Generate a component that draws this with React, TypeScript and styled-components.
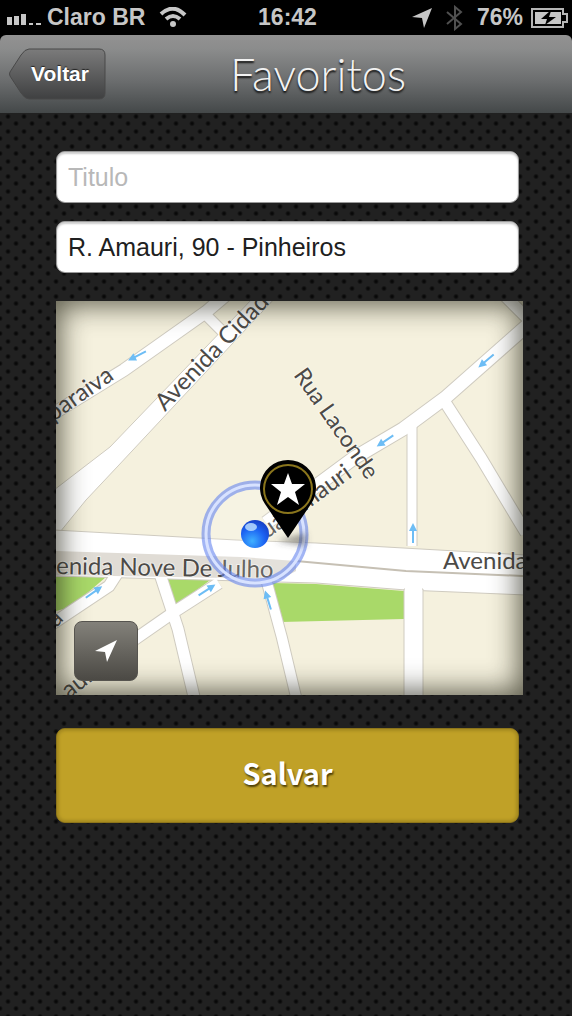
import React from 'react';
import styled, { createGlobalStyle } from 'styled-components';

const GlobalStyle = createGlobalStyle`
  * { box-sizing: border-box; }
  body {
    margin: 0;
    background-color: #212121;
    background-image:
      radial-gradient(circle at 50% 50%, #060606 0, #0a0a0a 1px, transparent 3px),
      radial-gradient(circle at 50% 50%, #060606 0, #0a0a0a 1px, transparent 3px);
    background-size: 16px 15px;
    background-position: 0 4px, 8px 11px;
    font-family: "Liberation Sans", Arial, sans-serif;
  }
  button, input { font-family: inherit; }
`;

const Screen = styled.div`
  display: flex;
  flex-direction: column;
  min-height: 100vh;
`;

const StatusBar = styled.div`
  display: grid;
  grid-template-columns: 1fr auto 1fr;
  align-items: center;
  height: 35px;
  padding: 0 4px 0 7px;
  background: #000;
  color: #c6c6c6;
  font-size: 23px;
  font-weight: 700;
  line-height: 35px;
  white-space: nowrap;
`;

const StatusGroup = styled.div<{ $end?: boolean }>`
  display: flex;
  align-items: center;
  justify-content: ${p => (p.$end ? 'flex-end' : 'flex-start')};
  gap: ${p => (p.$end ? 8 : 6)}px;
`;

const CarrierGap = styled.span`
  margin-right: 8px;
`;

const Header = styled.header`
  background: #000;
`;

const HeaderBar = styled.div`
  display: grid;
  grid-template-columns: 98px 1fr 34px;
  align-items: center;
  height: 78px;
  padding: 0 8px;
  border-radius: 6px 6px 0 0;
  background: linear-gradient(#929292 0, #8b8c8c 14px, #6b6d6e 46px, #444849 100%);
`;

const BackButton = styled.button`
  position: relative;
  display: block;
  height: 54px;
  padding: 0 0 0 6px;
  border: 0;
  background: none;
  color: #fff;
  font-size: 21px;
  font-weight: 700;
  text-shadow: 0 -1px 1px #222;
`;

const BackShape = styled.svg`
  position: absolute;
  inset: 0;
  width: 100%;
  height: 100%;
`;

const BackLabel = styled.span`
  position: relative;
`;

const Title = styled.h1`
  margin: 0;
  color: #f2f2f2;
  font-family: Lato, sans-serif;
  font-size: 45px;
  font-weight: 300;
  line-height: 78px;
  text-align: center;
  text-shadow: 0 2px 2px #111;
`;

const Form = styled.form`
  display: flex;
  flex-direction: column;
  padding: 38px 53px 0 56px;
`;

const Field = styled.input`
  width: 100%;
  height: 52px;
  margin-bottom: 18px;
  padding: 0 11px;
  border: 1px solid #999;
  border-radius: 9px;
  background: #fff;
  box-shadow: inset 0 2px 2px #ccc;
  color: #202020;
  font-size: 25px;
  outline: none;
  &::placeholder { color: #b8b8b8; opacity: 1; }
`;

const MapFrame = styled.div`
  position: relative;
  margin: 10px -4px 0 0;
  overflow: hidden;
  line-height: 0;
  &::after {
    content: "";
    position: absolute;
    inset: 0;
    box-shadow: inset 0 0 28px 4px rgba(32, 32, 16, 0.72);
    pointer-events: none;
  }
`;

const MapDrawing = styled.svg`
  display: block;
  width: 100%;
  height: auto;
  font-family: Lato, sans-serif;
`;

const LocateButton = styled.button`
  position: absolute;
  left: 18px;
  bottom: 14px;
  z-index: 1;
  display: grid;
  place-items: center;
  width: 64px;
  height: 60px;
  padding: 0;
  border: 1px solid #56544f;
  border-radius: 8px;
  background: linear-gradient(#83817a, #4b4944);
`;

const SaveButton = styled.button`
  height: 95px;
  margin-top: 33px;
  padding: 0 0 8px;
  border: 1px solid #8d751a;
  border-radius: 9px;
  background: #c0a127;
  box-shadow: inset 0 0 3px 2px #a58a20;
  color: #fff;
  font-family: "Noto Sans CJK JP", "Noto Sans", sans-serif;
  font-size: 29px;
  font-weight: 700;
  line-height: 40px;
  text-shadow: 1px 2px 2px #4a3c08;
`;

const road = (d: string, width: number) => ({ d, width });

const roads = [
  road('M-10 117 L68 69 L150 11 L170 -6', 12),
  road('M148 12 L168 32', 10),
  road('M476 22 L449 -5', 11),
  road('M474 22 L389 97 L347 128 L298 157 L210 222', 13),
  road('M387 98 L425 157 L470 232', 11),
  road('M356 124 V245', 9),
  road('M-10 327 L53 285 L64 268', 11),
  road('M62 350 L121 309 L163 282', 11),
  road('M104 273 L122 328 L139 400', 11),
  road('M210 278 L226 337 L241 400', 10),
];

const arrows = [
  { x: 81, y: 55, angle: 153 },
  { x: 430, y: 60, angle: 140 },
  { x: 329, y: 140, angle: 146 },
  { x: 357, y: 232, angle: -90 },
  { x: 38, y: 291, angle: -35 },
  { x: 151, y: 289, angle: -33 },
  { x: 212, y: 299, angle: -107 },
];

function CityMap() {
  return (
    <MapDrawing viewBox="0 0 467 394" role="img" aria-label="R. Amauri, 90">
      <defs>
        <radialGradient id="dot" cx="0.4" cy="0.75" r="0.75">
          <stop offset="0" stopColor="#3fb0ff" />
          <stop offset="0.6" stopColor="#1c62f2" />
          <stop offset="1" stopColor="#1741c8" />
        </radialGradient>
        <filter id="soft" x="-50%" y="-50%" width="200%" height="200%">
          <feGaussianBlur stdDeviation="3" />
        </filter>
      </defs>
      <rect width="467" height="394" fill="#f5f1de" />
      <g fill="#a9d969">
        <path d="M0 276 H50 L15 306 L0 310Z" />
        <path d="M109 277 H157 L118 306Z" />
        <path d="M216 282 L260 283 L348 290 V318 L225 321Z" />
      </g>
      <g fill="none" stroke="#cfcbc0">
        {roads.map(r => <path key={r.d} d={r.d} strokeWidth={r.width + 2} />)}
      </g>
      <path d="M-2 189 L54 146 L198 -4 H220 L62 165 L30 199 L4 231 L-2 236Z" fill="#fff" stroke="#cfcbc0" />
      <path d="M-2 229 L180 239 L260 242 L400 250 L470 254 V294 L350 289 L260 282 L-2 275Z" fill="#fff" stroke="#cfcbc0" />
      <path d="M348 288 V396 H367 V288Z" fill="#fff" stroke="#cfcbc0" />
      <g fill="none" stroke="#fff">
        {roads.map(r => <path key={r.d} d={r.d} strokeWidth={r.width} />)}
      </g>
      <path d="M349 282 H366 V296 H349Z" fill="#fff" />
      <path d="M0 250 L185 256 L240 260 V270 L225 278 L0 274Z" fill="#e0dcd5" />
      <path d="M240 260 L350 270 L467 275" fill="none" stroke="#c6c0b4" strokeWidth="2" />
      {arrows.map(a => (
        <path
          key={a.x + a.y}
          transform={'translate(' + a.x + ' ' + a.y + ') rotate(' + a.angle + ')'}
          d="M-10 -1 H2 V-4 L10 0 L2 4 V1 H-10Z"
          fill="#6dbdf5"
        />
      ))}
      <g fill="#4c4a47" stroke="#fff" strokeWidth="2" strokeOpacity="0.5" paintOrder="stroke" fontSize="24">
        <text transform="translate(-3 121) rotate(-35)">paraiva</text>
        <text transform="translate(109 111) rotate(-46)">Avenida Cidade</text>
        <text transform="translate(237 74) rotate(55)" fontSize="23">Rua Laconde</text>
        <text transform="translate(211 238) rotate(-36)">uá Amauri</text>
        <text transform="translate(0 273) rotate(1)">enida Nove De Julho</text>
        <text x="387" y="268">Avenida</text>
        <text transform="translate(0 327) rotate(-45)">a</text>
        <text transform="translate(13 398) rotate(-38)">auri</text>
      </g>
      <circle cx="199" cy="233" r="49" fill="#fff" fillOpacity="0.15" stroke="#6484ee" strokeWidth="9" strokeOpacity="0.6" />
      <circle cx="199" cy="233" r="49" fill="none" stroke="#d8e2ff" strokeWidth="3" />
      <circle cx="199" cy="233" r="14" fill="url(#dot)" />
      <ellipse cx="195" cy="226" rx="6" ry="4" fill="#c3e3ff" fillOpacity="0.8" />
      <path d="M220 240 L250 232 L250 245Z" fill="#444" fillOpacity="0.5" filter="url(#soft)" />
      <path d="M232 237 L209 203 A28 28 0 1 1 255 203Z" fill="#000" />
      <circle cx="232" cy="188" r="24" fill="none" stroke="#8a751c" strokeWidth="2" />
      <path d="M232 172 L236 183 L249 183 L239 191 L243 204 L232 196 L221 204 L225 191 L215 183 L228 183Z" fill="#fff" />
    </MapDrawing>
  );
}

export default function App() {
  return (
    <Screen>
      <GlobalStyle />
      <StatusBar>
        <StatusGroup>
          <svg width="34" height="20" viewBox="0 0 34 20" fill="#c6c6c6">
            <path d="M0 9h5v8H0zM7 8h5v9H7zM14 6h5v11h-5zM22 15h4v2h-4zM29 15h5v2h-5z" />
          </svg>
          <CarrierGap>Claro BR</CarrierGap>
          <svg width="28" height="22" viewBox="0 0 28 22" fill="none" stroke="#c6c6c6" strokeWidth="4">
            <path d="M2 7Q14 -4 26 8M7 12Q14 6 21 12" />
            <circle cx="14" cy="17" r="3" fill="#c6c6c6" stroke="none" />
          </svg>
        </StatusGroup>
        <span>16:42</span>
        <StatusGroup $end>
          <svg width="21" height="20" viewBox="0 0 21 20" fill="#c6c6c6">
            <path d="M20 0 L0 9 L10 10 L12 20Z" />
          </svg>
          <svg width="28" height="26" viewBox="0 0 28 26" fill="none" stroke="#505050" strokeWidth="2">
            <path d="M6 7 L20 19 L14 24 V2 L20 7 L6 19" />
          </svg>
          <span>76%</span>
          <svg width="37" height="20" viewBox="0 0 37 20">
            <path d="M1 1 H32 V6 H36 V14 H32 V19 H1Z" fill="none" stroke="#b5b5b5" strokeWidth="2" />
            <path d="M4 4 H30 V16 H4Z" fill="#c6c6c6" />
            <path d="M19 3 L10 11 H16 L14 17 L25 9 H18 L20 3Z" fill="#000" />
          </svg>
        </StatusGroup>
      </StatusBar>
      <Header>
        <HeaderBar>
          <BackButton type="button">
            <BackShape viewBox="0 0 98 54" preserveAspectRatio="none">
              <defs>
                <linearGradient id="back" x2="0" y2="1">
                  <stop offset="0" stopColor="#7b7b7b" />
                  <stop offset="1" stopColor="#3f4041" />
                </linearGradient>
              </defs>
              <path
                d="M21 2 H91 Q97 2 97 8 V46 Q97 52 91 52 H21 Q17 52 13 46 L2 29 Q1 27 2 25 L13 8 Q17 2 21 2Z"
                fill="url(#back)"
                stroke="#484848"
                strokeWidth="1"
              />
            </BackShape>
            <BackLabel>Voltar</BackLabel>
          </BackButton>
          <Title>Favoritos</Title>
        </HeaderBar>
      </Header>
      <Form onSubmit={e => e.preventDefault()}>
        <Field aria-label="Titulo" placeholder="Titulo" />
        <Field aria-label="Endereço" defaultValue="R. Amauri, 90 - Pinheiros" />
        <MapFrame>
          <CityMap />
          <LocateButton type="button" aria-label="Minha localização">
            <svg width="22" height="22" viewBox="0 0 22 22" fill="#fff">
              <path d="M22 0 L0 11 L10 12 L12 22Z" />
            </svg>
          </LocateButton>
        </MapFrame>
        <SaveButton type="submit">Salvar</SaveButton>
      </Form>
    </Screen>
  );
}
